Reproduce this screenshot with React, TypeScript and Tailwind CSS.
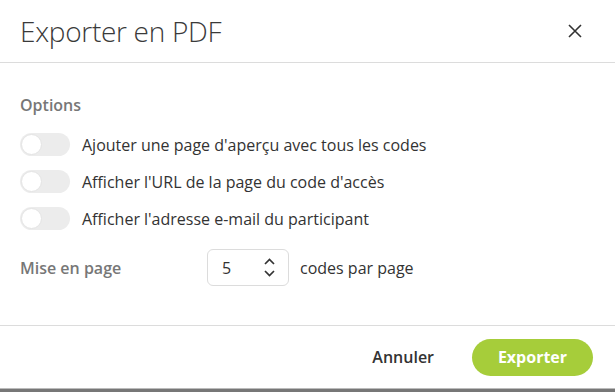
import { useState } from "react";

const options = [
  "Ajouter une page d'aperçu avec tous les codes",
  "Afficher l'URL de la page du code d'accès",
  "Afficher l'adresse e-mail du participant",
];

function Toggle({ on, onClick }: { on: boolean; onClick: () => void }) {
  return (
    <button
      type="button"
      onClick={onClick}
      className={`relative h-[23px] w-[50px] shrink-0 rounded-full ${on ? "bg-[#a6cd3a]" : "bg-[#ececec]"}`}
    >
      <span
        className={`absolute top-[1px] h-[21px] w-[21px] rounded-full border border-[#e4e4e4] bg-white ${on ? "left-[28px]" : "left-[1px]"}`}
      />
    </button>
  );
}

export default function App() {
  const [flags, setFlags] = useState([false, false, false]);
  const [perPage, setPerPage] = useState(5);

  return (
    <div className="flex h-[392px] w-[615px] flex-col bg-white font-['Open_Sans',sans-serif] text-[#333]">
      <header className="flex h-[63px] shrink-0 items-center justify-between border-b border-[#dcdcdc] pl-[20px] pr-[33px]">
        <h1 className="text-[28px] font-light leading-none tracking-[-0.3px] text-[#3a3a3a]">
          Exporter en PDF
        </h1>
        <button type="button" className="text-[#333]">
          <svg width="14" height="14" viewBox="0 0 14 14" fill="none">
            <path d="M1 1L13 13M13 1L1 13" stroke="currentColor" strokeWidth="1.6" />
          </svg>
        </button>
      </header>

      <main className="flex flex-1 flex-col px-[20px] pt-[32px]">
        <h2 className="text-[16px] font-semibold leading-[20px] text-[#777]">Options</h2>
        <div className="mt-[18px] flex flex-col gap-[14px]">
          {options.map((label, i) => (
            <label key={label} className="flex items-center gap-[12px]">
              <Toggle
                on={flags[i]}
                onClick={() => setFlags((f) => f.map((v, j) => (j === i ? !v : v)))}
              />
              <span className="text-[16px] leading-[20px] text-[#333]">{label}</span>
            </label>
          ))}
        </div>

        <div className="mt-[19px] flex items-center">
          <span className="w-[187px] text-[16px] font-semibold text-[#777]">Mise en page</span>
          <div className="flex h-[37px] w-[82px] items-center justify-between rounded-[6px] border border-[#dcdcdc] pl-[14px] pr-[13px]">
            <span className="text-[16px] text-[#333]">{perPage}</span>
            <div className="flex flex-col gap-[5px] text-[#333]">
              <button type="button" onClick={() => setPerPage((p) => p + 1)}>
                <svg width="11" height="7" viewBox="0 0 11 7" fill="none">
                  <path d="M1 6L5.5 1.5L10 6" stroke="currentColor" strokeWidth="1.7" />
                </svg>
              </button>
              <button type="button" onClick={() => setPerPage((p) => Math.max(1, p - 1))}>
                <svg width="11" height="7" viewBox="0 0 11 7" fill="none">
                  <path d="M1 1L5.5 5.5L10 1" stroke="currentColor" strokeWidth="1.7" />
                </svg>
              </button>
            </div>
          </div>
          <span className="ml-[11px] text-[16px] text-[#333]">codes par page</span>
        </div>
      </main>

      <footer className="flex h-[63px] shrink-0 items-center justify-end gap-[38px] border-t border-[#dcdcdc] pr-[22px]">
        <button type="button" className="text-[16px] font-semibold text-[#333]">
          Annuler
        </button>
        <button
          type="button"
          className="h-[37px] w-[121px] rounded-full bg-[#a6cd3a] text-[16px] font-bold text-white"
        >
          Exporter
        </button>
      </footer>
      <div className="h-[4px] shrink-0 border-t border-[#bbb] bg-[#777]" />
    </div>
  );
}
